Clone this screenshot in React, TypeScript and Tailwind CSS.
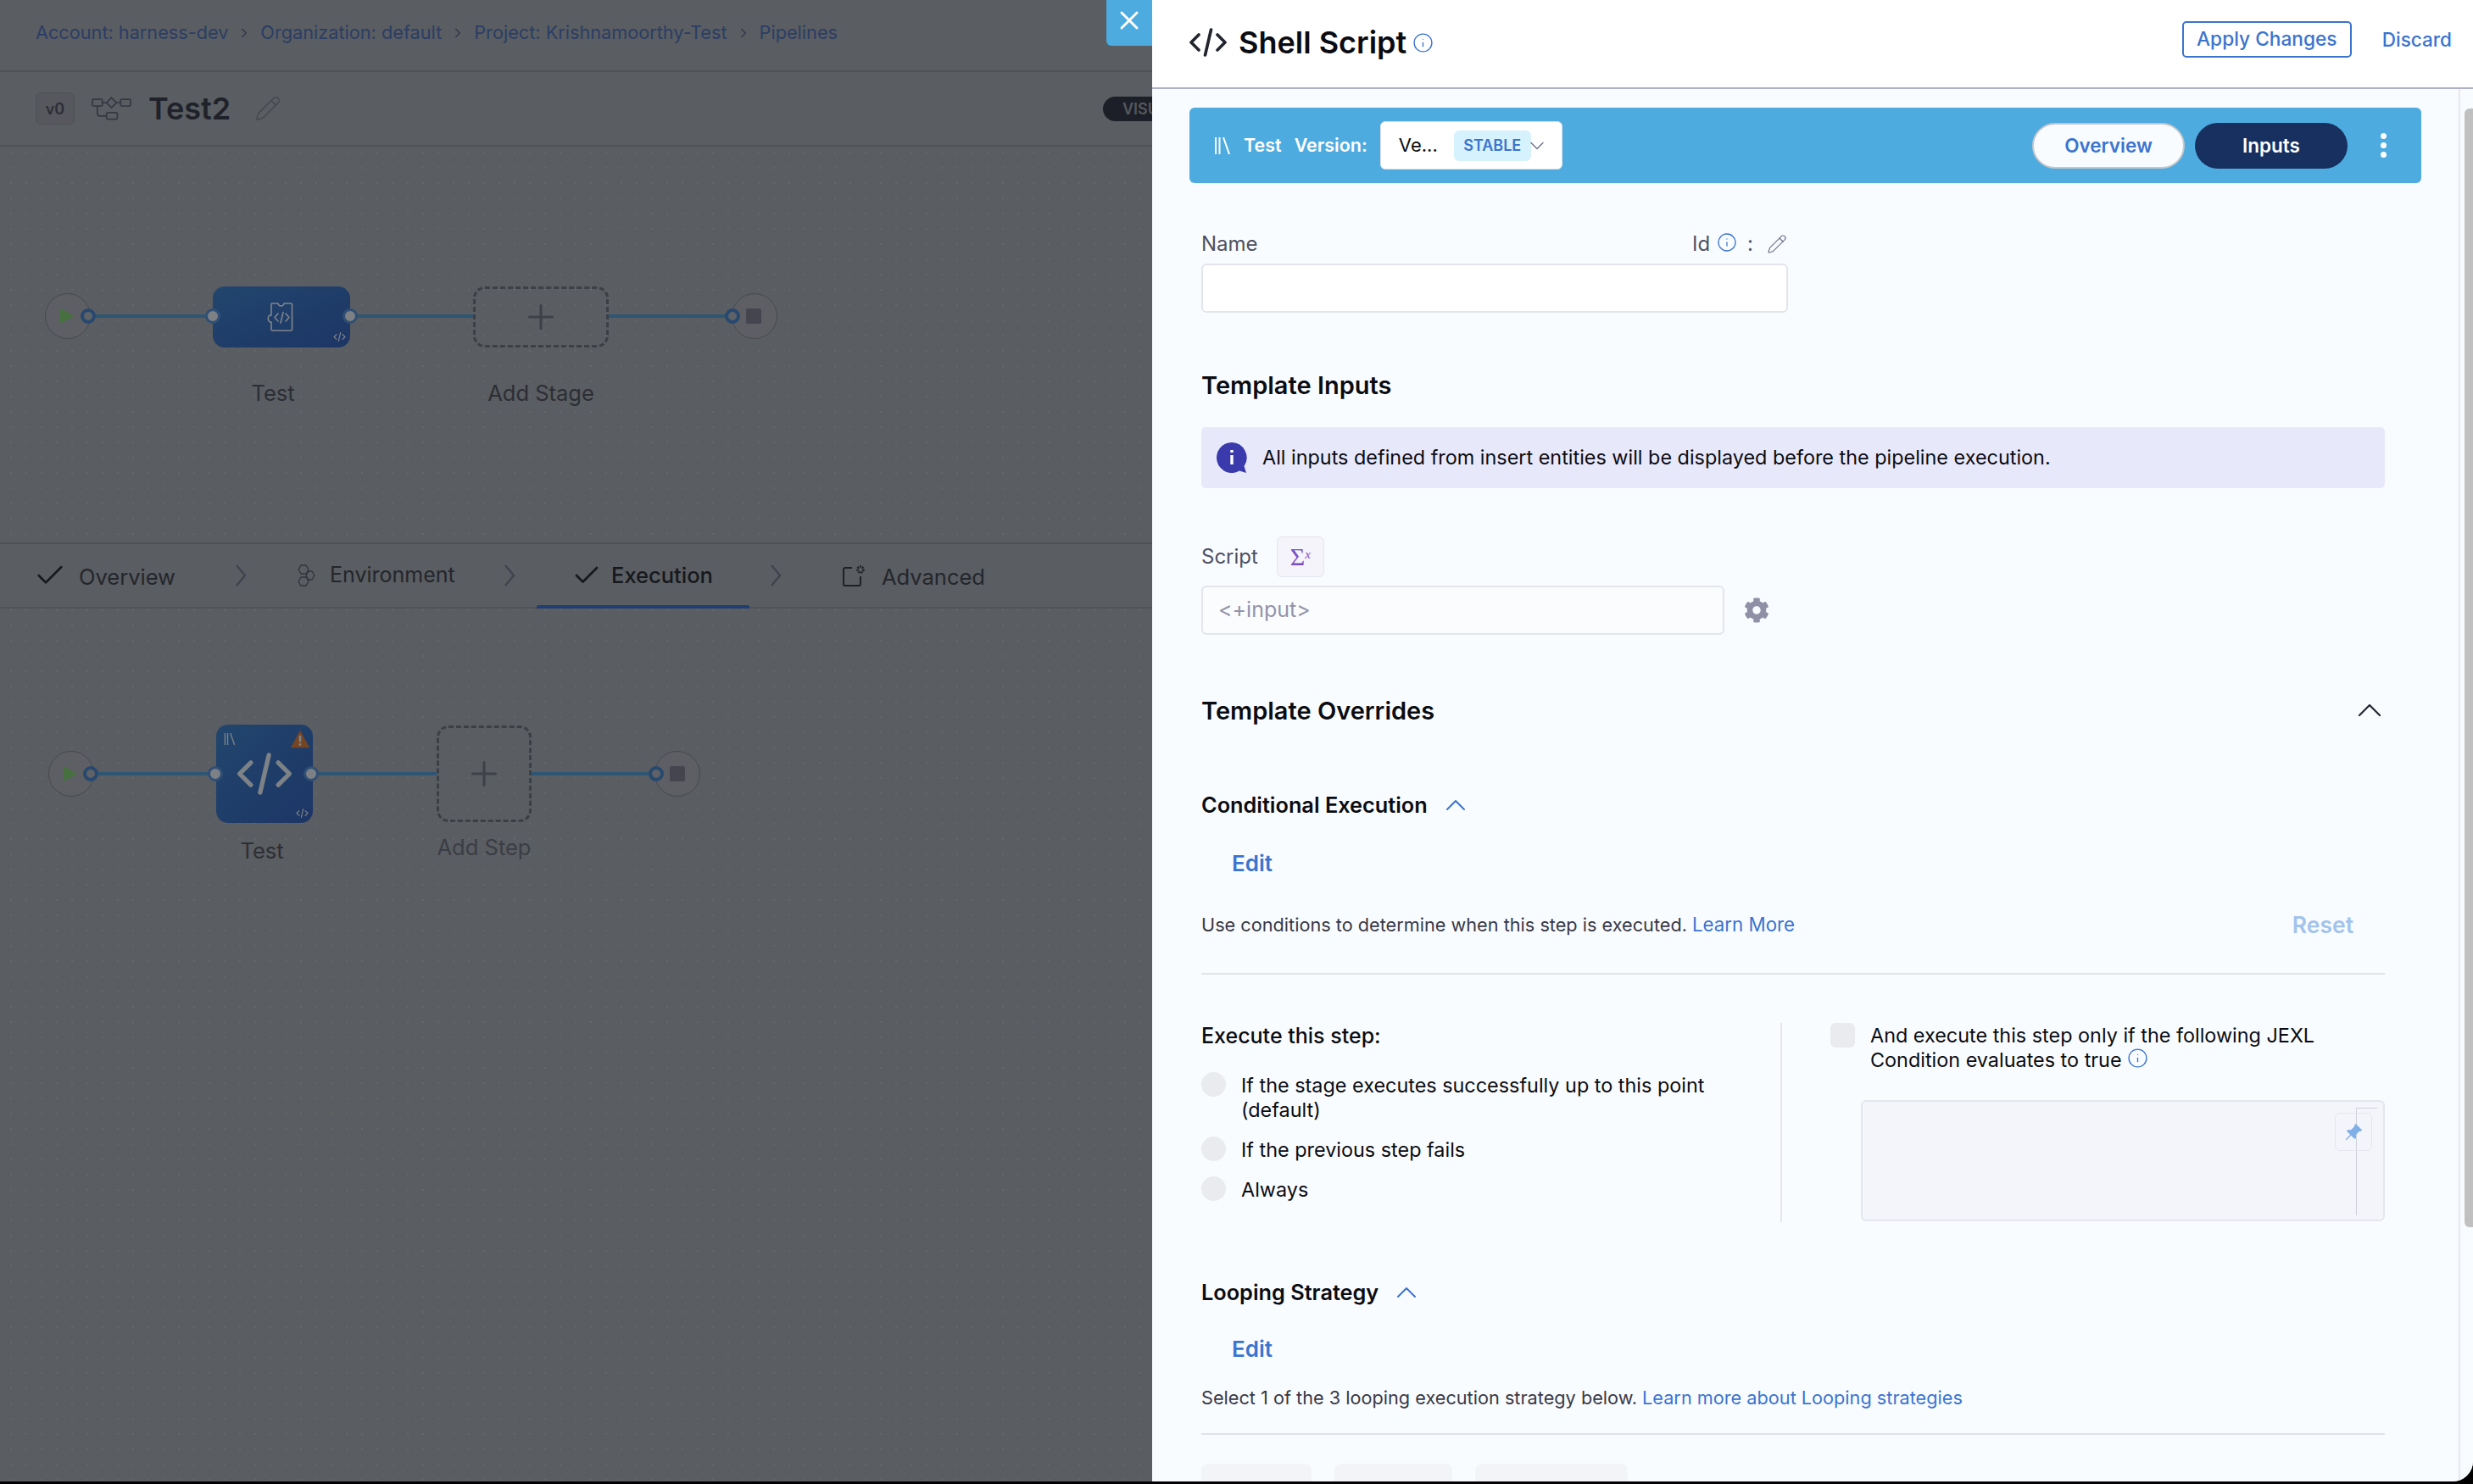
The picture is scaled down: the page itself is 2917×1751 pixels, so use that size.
import React from 'react';
import { Check, ChevronDown, ChevronRight, ChevronUp, Info, Pencil, Plus, X } from 'lucide-react';
import { FaCog } from 'react-icons/fa';
import { BsPinAngleFill } from 'react-icons/bs';

const CodeGlyph = ({ className }: { className?: string }) => (
  <svg viewBox="0 0 44 34" fill="none" stroke="currentColor" strokeWidth="3.6" strokeLinecap="round" strokeLinejoin="round" className={className}>
    <path d="M11 8 2 17l9 9" />
    <path d="M33 8l9 9-9 9" />
    <path d="M25.5 2 18.5 32" />
  </svg>
);

const LibraryGlyph = ({ className }: { className?: string }) => (
  <svg viewBox="0 0 20 20" fill="none" stroke="currentColor" strokeWidth="2" className={className}>
    <path d="M2 0v20M6.5 0v20M11 0l7 20" />
  </svg>
);

const PuzzleGlyph = ({ className }: { className?: string }) => (
  <svg viewBox="0 0 36 36" fill="none" stroke="currentColor" strokeWidth="1.6" strokeLinejoin="round" className={className}>
    <path d="M7 2h7c.5 4 6.500 4 7 0h8c1 0 1.500.5 1.500 1.500v29c0 1-.5 1.500-1.500 1.500H7.500c-1 0-1.500-.5-1.500-1.500V24c-5 1-5-9 0-8V3c0-.5.5-1 1-1z" />
    <path d="M14 14l-4 4.500 4 4.500M23 14l4 4.500-4 4.500M20 12.500 17 25" strokeLinecap="round" />
  </svg>
);

const PipelineGlyph = ({ className }: { className?: string }) => (
  <svg viewBox="0 0 48 28" fill="none" stroke="currentColor" strokeWidth="1.8" className={className}>
    <rect x="1" y="3" width="12" height="8" rx="1.500" />
    <rect x="35" y="3" width="12" height="8" rx="1.500" />
    <rect x="18" y="19" width="13" height="8" rx="1.500" />
    <path d="M24 1l6 6-6 6-6-6zM13 7h5M30 7h5M7 11v9c0 2 1 3 3 3h8" />
  </svg>
);

const StartCircle = ({ className, playClass }: { className: string; playClass: string }) => (
  <>
    <div className={`absolute h-[54px] w-[54px] rounded-full border border-[#47494e] bg-[#5e5f64] ${className}`} />
    <svg viewBox="0 0 16 18" className={`absolute h-[18px] w-[16px] fill-[#47703f] ${playClass}`}>
      <path d="M0 0l16 9-16 9z" />
    </svg>
  </>
);

const EndCircle = ({ className, stopClass }: { className: string; stopClass: string }) => (
  <>
    <div className={`absolute h-[54px] w-[54px] rounded-full border border-[#47494e] bg-[#5e5f64] ${className}`} />
    <div className={`absolute h-[18px] w-[18px] rounded-[2px] bg-[#44454f] ${stopClass}`} />
  </>
);

const Ring = ({ className }: { className: string }) => (
  <div className={`absolute z-10 h-[18px] w-[18px] rounded-full border-[4px] border-[#27486f] bg-[#5f6266] ${className}`} />
);

const Port = ({ className }: { className: string }) => (
  <div className={`absolute z-10 h-[18px] w-[18px] rounded-full border-[3px] border-[#2f4f75] bg-[#7d8084] ${className}`} />
);

const Wire = ({ className }: { className: string }) => (
  <div className={`absolute h-[4px] bg-[#2e5674] ${className}`} />
);

const AddBox = ({ className }: { className: string }) => (
  <div className={`absolute flex items-center justify-center rounded-[14px] border-[3px] border-dashed border-[#3d3f46] ${className}`}>
    <Plus size={46} strokeWidth={1.6} className="text-[#3f4149]" />
  </div>
);

const CanvasLabel = ({ className, children }: { className: string; children: React.ReactNode }) => (
  <div className={`absolute -translate-x-1/2 whitespace-nowrap text-[25.5px] leading-[32px] text-[#2c2e35] ${className}`}>{children}</div>
);

const dots = 'bg-[radial-gradient(circle,#64676a_1px,transparent_1.5px)] bg-[size:18px_18px]';

const StepChevron = ({ className }: { className: string }) => (
  <svg viewBox="0 0 14 26" fill="none" stroke="currentColor" strokeWidth="2.4" className={`h-[26px] w-[14px] shrink-0 text-[#41444e] ${className}`}>
    <path d="M2 1l10 12L2 25" />
  </svg>
);

const PipelineStudio = () => (
  <div className="flex h-full w-[1359px] shrink-0 flex-col overflow-hidden bg-[#5a5d61]">
    <div className="flex h-[83px] shrink-0 items-center gap-[10px] pb-[6px] pl-[42px] text-[21.7px] text-[#2b3d66]">
      <span>Account: harness-dev</span>
      <ChevronRight size={18} className="text-[#34384a]" />
      <span>Organization: default</span>
      <ChevronRight size={18} className="text-[#34384a]" />
      <span>Project: Krishnamoorthy-Test</span>
      <ChevronRight size={18} className="text-[#34384a]" />
      <span>Pipelines</span>
    </div>
    <div className="relative z-10 -mb-[2px] flex h-[90px] shrink-0 items-center border-y-2 border-[#4f5256] pl-[42px]">
      <div className="flex h-[38px] w-[46px] shrink-0 items-center justify-center rounded-[6px] border border-[#505257] bg-[#56585d] text-[18px] font-semibold text-[#2c2e36]">v0</div>
      <PipelineGlyph className="ml-[20px] h-[28px] w-[47px] shrink-0 text-[#363943]" />
      <span className="ml-[20px] w-[97px] shrink-0 text-[36px] font-semibold leading-none text-[#1f222a]">Test2</span>
      <Pencil size={32} strokeWidth={1} className="ml-[28px] shrink-0 text-[#44464f]" />
      <div className="ml-[969px] flex h-[29px] w-[120px] shrink-0 items-center rounded-full bg-[#1c1f28] pl-[23px] text-[18px] font-semibold text-[#55585f]">VISUAL</div>
    </div>
    <div className={`relative h-[469px] shrink-0 ${dots} bg-[position:4px_0px]`}>
      <StartCircle className="left-[53px] top-[175px]" playClass="left-[71px] top-[193px]" />
      <Ring className="left-[95px] top-[193px]" />
      <Wire className="left-[112px] top-[200px] w-[131px]" />
      <div className="absolute left-[251px] top-[167px] flex h-[72px] w-[162px] items-center justify-center rounded-[14px] bg-linear-to-br from-[#21466e] to-[#1d3565] text-[#80858a]">
        <PuzzleGlyph className="h-[36px] w-[36px]" />
        <CodeGlyph className="absolute bottom-[7px] right-[5px] h-[11px] w-[15px]" />
      </div>
      <Port className="left-[242px] top-[193px]" />
      <Port className="left-[404px] top-[193px]" />
      <Wire className="left-[422px] top-[200px] w-[136px]" />
      <AddBox className="left-[558px] top-[167px] h-[72px] w-[160px]" />
      <Wire className="left-[718px] top-[200px] w-[137px]" />
      <EndCircle className="left-[863px] top-[175px]" stopClass="left-[880px] top-[193px]" />
      <Ring className="left-[855px] top-[193px]" />
      <CanvasLabel className="left-[322px] top-[277px]">Test</CanvasLabel>
      <CanvasLabel className="left-[638px] top-[277px]">Add Stage</CanvasLabel>
    </div>
    <div className="relative z-10 -mb-[2px] flex h-[78px] shrink-0 items-center border-y-2 border-[#4f5256] pl-[39px] text-[25.5px] text-[#24262d]">
      <Check size={40} strokeWidth={1.5} className="shrink-0 text-[#15171d]" />
      <span className="ml-[14px] mt-[4px] w-[113px] whitespace-nowrap">Overview</span>
      <StepChevron className="ml-[71px]" />
      <svg viewBox="0 0 22 26" fill="none" stroke="currentColor" strokeWidth="1.300" className="ml-[59px] h-[26px] w-[22px] shrink-0 text-[#33353d]">
        <path d="M5 1h6l3 5-3 5H5L2 6zM14 8h4l3 5-3 5h-4l-3-5zM5 15h6l3 5-3 5H5l-3-5z" />
      </svg>
      <span className="ml-[17px] w-[148px] whitespace-nowrap text-[25px]">Environment</span>
      <StepChevron className="ml-[57px]" />
      <div className="relative ml-[25px] flex h-full w-[251px] shrink-0 items-center gap-[11px] pl-[41px] text-[#16181e]">
        <Check size={36} strokeWidth={1.800} className="shrink-0" />
        <span className="whitespace-nowrap font-medium">Execution</span>
        <div className="absolute bottom-[-2px] left-0 h-[4px] w-full rounded-t-[2px] bg-[#1f3f72]" />
      </div>
      <StepChevron className="ml-[24px]" />
      <svg viewBox="0 0 28 26" fill="none" stroke="currentColor" strokeWidth="2" className="ml-[72px] h-[26px] w-[28px] shrink-0 text-[#1f2127]">
        <path d="M11 4H3c-1 0-2 1-2 2v17c0 1 1 2 2 2h16c1 0 2-1 2-2v-9" />
        <circle cx="21" cy="6" r="3.500" strokeWidth="2.600" strokeDasharray="2 1" />
      </svg>
      <span className="ml-[18px] mt-[4px] whitespace-nowrap">Advanced</span>
    </div>
    <div className={`relative flex-1 ${dots} bg-[position:4px_-5px]`}>
      <StartCircle className="left-[57px] top-[170px]" playClass="left-[75px] top-[188px]" />
      <Ring className="left-[98px] top-[188px]" />
      <Wire className="left-[116px] top-[195px] w-[130px]" />
      <div className="absolute left-[255px] top-[139px] flex h-[116px] w-[114px] items-center justify-center rounded-[14px] bg-linear-to-br from-[#21466e] to-[#1d3565] text-[#7d8286]">
        <LibraryGlyph className="absolute left-[9px] top-[10px] h-[14px] w-[14px]" />
        <svg viewBox="0 0 28 28" className="absolute right-[3px] top-[5px] h-[24px] w-[24px]">
          <path d="M14 2 27 26H1z" fill="#754522" />
          <path d="M14 9v9M14 20v3" stroke="#7d8286" strokeWidth="3" />
        </svg>
        <CodeGlyph className="h-[50px] w-[72px]" />
        <CodeGlyph className="absolute bottom-[6px] right-[5px] h-[11px] w-[15px]" />
      </div>
      <Port className="left-[245px] top-[188px]" />
      <Port className="left-[358px] top-[188px]" />
      <Wire className="left-[376px] top-[195px] w-[139px]" />
      <AddBox className="left-[515px] top-[140px] h-[114px] w-[112px]" />
      <Wire className="left-[627px] top-[195px] w-[138px]" />
      <EndCircle className="left-[772px] top-[170px]" stopClass="left-[790px] top-[188px]" />
      <Ring className="left-[765px] top-[188px]" />
      <CanvasLabel className="left-[309px] top-[272px]">Test</CanvasLabel>
      <CanvasLabel className="left-[571px] top-[268px] text-[#3b3d46]">Add Step</CanvasLabel>
    </div>
  </div>
);

const InfoDot = ({ className }: { className?: string }) => (
  <Info size={24} strokeWidth={1.300} className={`shrink-0 text-[#3b74cf] ${className ?? ''}`} />
);

const SectionToggle = ({ children }: { children: React.ReactNode }) => (
  <div className="flex h-[30px] items-center gap-[13px] text-[25.3px] font-semibold leading-none text-[#0b0c12]">
    <span>{children}</span>
    <ChevronUp size={40} strokeWidth={1.200} className="text-[#3b74cf]" />
  </div>
);

const EditLink = () => (
  <div className="flex h-[30px] items-center pl-[36px] text-[26px] font-semibold leading-none text-[#3b74cf]">Edit</div>
);

const RadioRow = ({ label, className }: { label: string; className: string }) => (
  <div className={`flex items-start gap-[18px] ${className}`}>
    <div className="h-[29px] w-[29px] shrink-0 rounded-full bg-[#e9ebef]" />
    <span className="max-w-[610px] translate-y-[1px] text-[23.4px] leading-[29px] text-[#0b0c12]">{label}</span>
  </div>
);

const ShellScriptPanel = () => (
  <div className="flex h-full flex-1 flex-col bg-white">
    <div className="flex h-[105px] shrink-0 items-center border-b-2 border-[#b0b1c9] pl-[44px] pb-[4px]">
      <CodeGlyph className="h-[34px] w-[44px] text-[#22252e]" />
      <span className="ml-[14px] text-[36px] font-semibold leading-none text-[#0b0c12]">Shell Script</span>
      <Info size={25} strokeWidth={1.300} className="ml-[7px] mt-[2px] text-[#3b74cf]" />
      <div className="mb-[6px] ml-auto flex h-[43px] w-[200px] items-center justify-center rounded-[5px] border-2 border-[#3b74cf] text-[22.7px] font-medium text-[#3b74cf]">Apply Changes</div>
      <span className="mb-[6px] ml-[36px] mr-[25px] text-[22.5px] font-medium text-[#3b74cf]">Discard</span>
    </div>
    <div className="flex min-h-0 flex-1 bg-[#f9fcff]">
      <div className="min-w-0 flex-1 overflow-hidden pl-[44px]">
        <div className="mt-[22px] flex h-[89px] w-[1453px] items-center rounded-[6px] bg-[#4dabdf] pl-[29px] pr-[41px] text-[21.5px] font-semibold text-white">
          <LibraryGlyph className="h-[20px] w-[20px]" />
          <span className="ml-[15px]">Test</span>
          <span className="ml-[15px]">Version:</span>
          <div className="ml-[15px] flex h-[57px] w-[215px] items-center rounded-[6px] border border-[#dfe1ea] bg-white pl-[21px]">
            <span className="text-[22px] font-normal text-[#0b0c12]">Ve...</span>
            <div className="ml-[19px] flex h-[36px] w-[91px] shrink-0 items-center justify-center rounded-[6px] bg-[#d6f2fc] text-[18px] font-semibold text-[#3b74cf]">STABLE</div>
            <ChevronDown size={28} strokeWidth={1.100} className="-ml-[7px] shrink-0 text-[#6b6d85]" />
          </div>
          <div className="ml-auto flex h-[54px] w-[180px] items-center justify-center rounded-full border-2 border-[#c6c7cc] bg-[#f9fcff] text-[22.5px] text-[#3b74cf]">Overview</div>
          <div className="ml-[12px] flex h-[54px] w-[180px] items-center justify-center rounded-full bg-[#17305f] text-[22.5px]">Inputs</div>
          <div className="ml-[39px] flex flex-col gap-[4px]">
            <div className="h-[7px] w-[7px] rounded-full bg-white" />
            <div className="h-[7px] w-[7px] rounded-full bg-white" />
            <div className="h-[7px] w-[7px] rounded-full bg-white" />
          </div>
        </div>

        <div className="w-[1410px] pl-[14px]">
          <div className="mt-[57px] flex h-[30px] w-[691px] items-center text-[24px] text-[#4f5162]">
            <span>Name</span>
            <span className="ml-auto">Id</span>
            <InfoDot className="ml-[8px] -translate-y-[2px]" />
            <span className="ml-[12px]">:</span>
            <Pencil size={24} strokeWidth={1.100} className="ml-[16px] text-[#6b6d85]" />
          </div>
          <div className="mt-[8px] h-[58px] w-[692px] rounded-[6px] border-2 border-[#e4e5ec] bg-white" />

          <div className="mt-[67px] flex h-[36px] items-center text-[29px] font-semibold leading-none text-[#0b0c12]">Template Inputs</div>
          <div className="mt-[32px] flex h-[72px] items-center rounded-[5px] bg-[#e8e8fb] pl-[18px] text-[23.4px] text-[#0b0c12]">
            <svg viewBox="0 0 36 36" className="h-[36px] w-[36px] shrink-0">
              <path d="M18 0a18 18 0 1 0 9 33.600L35 36l-2.500-8A18 18 0 0 0 18 0z" fill="#3a3aad" />
              <path d="M18 9v3M18 15v11" stroke="#fff" strokeWidth="3.400" />
            </svg>
            <span className="ml-[18px]">All inputs defined from insert entities will be displayed before the pipeline execution.</span>
          </div>

          <div className="mt-[57px] flex h-[48px] items-center text-[24px] text-[#4f5162]">
            <span>Script</span>
            <div className="ml-[22px] flex h-[48px] w-[56px] items-center justify-center rounded-[6px] border border-[#e4e5ec] bg-[#f4f4fa] font-['Liberation_Serif',serif] text-[#7a4fc4]">
              <span className="text-[30px] leading-none">Σ</span>
              <span className="mb-[6px] text-[15px] italic leading-none">x</span>
            </div>
          </div>
          <div className="mt-[10px] flex h-[58px] items-center">
            <div className="flex h-[58px] w-[617px] items-center rounded-[6px] border-2 border-[#e4e5ec] bg-[#fbfcfe] pl-[18px] text-[25px] text-[#9293ab]">{'<+input>'}</div>
            <FaCog className="ml-[23px] h-[30px] w-[30px] text-[#8f90a6]" />
          </div>

          <div className="mt-[71px] flex h-[36px] items-center justify-between text-[29px] font-semibold leading-none text-[#0b0c12]">
            <span>Template Overrides</span>
            <ChevronUp size={48} strokeWidth={1.100} className="-mr-[6px] text-[#22252e]" />
          </div>

          <div className="mt-[79px]"><SectionToggle>Conditional Execution</SectionToggle></div>
          <div className="mt-[39px]"><EditLink /></div>
          <div className="mt-[42px] flex h-[30px] items-center text-[21.7px] text-[#383946]">
            <span>Use conditions to determine when this step is executed.</span>
            <span className="ml-[6px] text-[22.3px] text-[#3b74cf]">Learn More</span>
            <span className="ml-auto mr-[37px] mt-[1px] text-[26.5px] font-semibold text-[#a3c3ec]">Reset</span>
          </div>
          <div className="mt-[42px] h-[2px] bg-[#e1e3ea]" />

          <div className="mt-[57px] flex h-[235px]">
            <div className="w-[685px] shrink-0 border-r-2 border-[#e4e6ec]">
              <div className="flex h-[32px] items-center text-[25px] font-medium text-[#0b0c12]">Execute this step:</div>
              <RadioRow className="mt-[26px]" label="If the stage executes successfully up to this point (default)" />
              <RadioRow className="mt-[18px]" label="If the previous step fails" />
              <RadioRow className="mt-[18px]" label="Always" />
            </div>
            <div className="flex-1 pl-[57px]">
              <div className="flex items-start gap-[18px]">
                <div className="h-[29px] w-[29px] shrink-0 rounded-[6px] bg-[#e9ebef]" />
                <span className="w-[600px] text-[23.4px] leading-[29px] text-[#0b0c12]">
                  And execute this step only if the following JEXL Condition evaluates to true
                  <Info size={25} strokeWidth={1.300} className="ml-[6px] inline -translate-y-[4px] text-[#3b74cf]" />
                </span>
              </div>
              <div className="relative ml-[36px] mt-[33px] h-[143px] w-[618px] rounded-[6px] border-2 border-[#e6e7ee] bg-[#f4f5fa]">
                <div className="absolute left-[582px] top-[7px] h-[127px] w-[25px] border-l border-t border-[#cfd1d9]" />
                <div className="absolute left-[557px] top-[13px] flex h-[45px] w-[44px] items-center justify-center rounded-[6px] border border-[#e6e7ee]">
                  <BsPinAngleFill className="h-[22px] w-[22px] -scale-x-100 rotate-90 text-[#7fb0e8]" />
                </div>
              </div>
            </div>
          </div>

          <div className="mt-[68px]"><SectionToggle>Looping Strategy</SectionToggle></div>
          <div className="mt-[37px]"><EditLink /></div>
          <div className="mt-[27px] flex h-[30px] items-center text-[21.7px] text-[#383946]">
            <span>Select 1 of the 3 looping execution strategy below.</span>
            <span className="ml-[6px] text-[#3b74cf]">Learn more about Looping strategies</span>
          </div>
          <div className="mt-[27px] h-[2px] bg-[#e1e3ea]" />
          <div className="mt-[34px] flex gap-[27px]">
            <div className="h-[60px] w-[130px] rounded-[8px] bg-[#f3f4f8]" />
            <div className="h-[60px] w-[139px] rounded-[8px] bg-[#f3f4f8]" />
            <div className="h-[60px] w-[180px] rounded-[8px] bg-[#f3f4f8]" />
          </div>
        </div>
      </div>
      <div className="w-[17px] shrink-0 border-l-2 border-[#e8e9ef] pl-[5px] pt-[23px]">
        <div className="h-[1320px] w-[12px] rounded-l-[6px] bg-[#c0c0c0]" />
      </div>
    </div>
  </div>
);

export default function App() {
  return (
    <div className="relative h-[1751px] w-[2917px] overflow-hidden bg-black font-['Inter',sans-serif]">
      <div className="flex h-[1748px] w-full overflow-hidden rounded-br-[24px]">
        <PipelineStudio />
        <ShellScriptPanel />
      </div>
      <button className="absolute left-[1305px] top-0 z-20 flex h-[54px] w-[54px] items-center justify-center rounded-bl-[6px] bg-[#4dabdf] pb-[6px] text-white">
        <X size={36} strokeWidth={2} />
      </button>
    </div>
  );
}
